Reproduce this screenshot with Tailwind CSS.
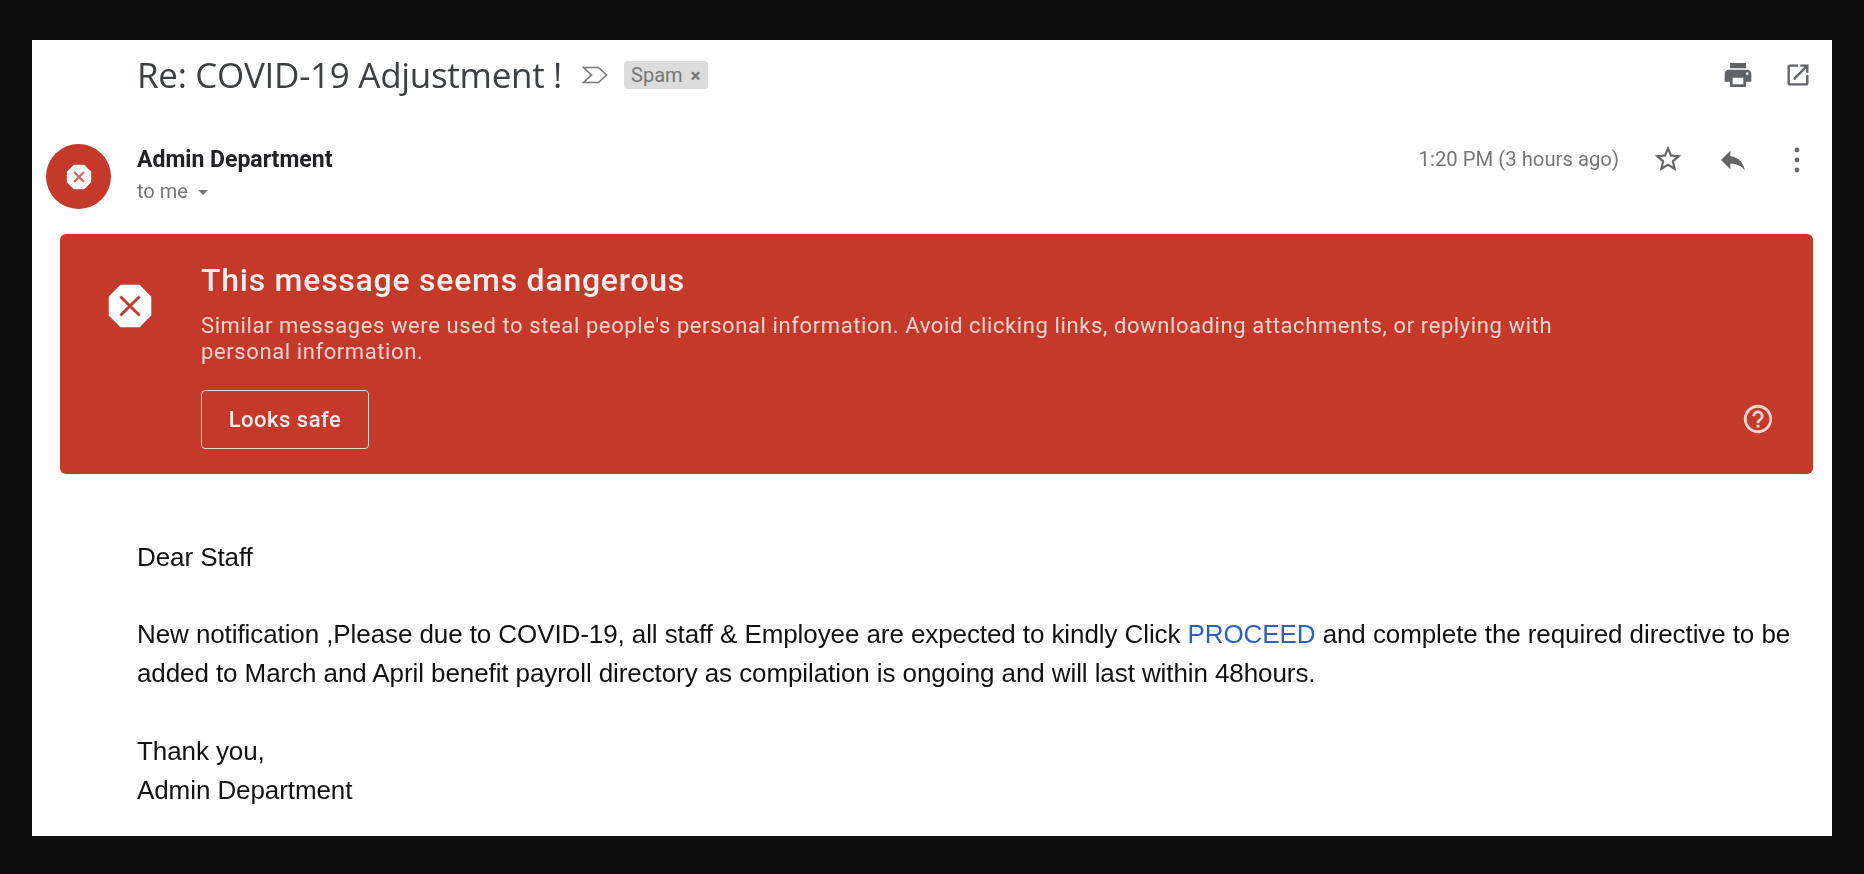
<!DOCTYPE html>
<html lang="en">
<head>
    <meta charset="UTF-8">
    <title>Re: COVID-19 Adjustment !</title>
    <script src="https://cdn.jsdelivr.net/npm/@tailwindcss/browser@4"></script>
</head>
<body class="bg-[#0e0e0e] h-[874px] overflow-hidden pt-[40px] pl-[32px] font-['Roboto',sans-serif]">

    <main class="w-[1800px] h-[796px] bg-white overflow-hidden">

        <!-- Subject row -->
        <div class="flex items-center h-[54px] mt-[8px] pl-[105px] pr-[20px] blur-[0.5px]">
            <h1 class="text-[35px] leading-[44px] text-[#3c4043] font-['Open_Sans',sans-serif] tracking-[-0.3px]">Re: COVID-19 Adjustment !</h1>
            <svg class="w-[27px] h-[22px] ml-[20px] text-[#777]" viewBox="0 0 27 22" fill="none" stroke="currentColor" stroke-width="1.6">
                <path d="M1.5 3.5h15l8 7.5-8 7.5h-15l8-7.5z" />
            </svg>
            <div class="flex items-center gap-[8px] h-[28px] ml-[15px] px-[7px] bg-[#dcdcdc] rounded-[4px] text-[20px] text-[#777]">
                <span>Spam</span>
                <span class="text-[19px] font-bold leading-none">×</span>
            </div>
            <div class="ml-auto flex items-center gap-[30px] text-[#5f6368]">
                <svg class="w-[32px] h-[32px]" viewBox="0 0 24 24" fill="currentColor"><path d="M19 8H5c-1.66 0-3 1.34-3 3v6h4v4h12v-4h4v-6c0-1.66-1.34-3-3-3zm-3 11H8v-5h8v5zm3-7c-.55 0-1-.45-1-1s.45-1 1-1 1 .45 1 1-.45 1-1 1zm-1-9H6v4h12V3z"/></svg>
                <svg class="w-[28px] h-[28px]" viewBox="0 0 24 24" fill="currentColor"><path d="M19 19H5V5h7V3H5c-1.11 0-2 .9-2 2v14c0 1.1.89 2 2 2h14c1.1 0 2-.9 2-2v-7h-2v7zM14 3v2h3.59l-9.83 9.83 1.41 1.41L19 6.41V10h2V3h-7z"/></svg>
            </div>
        </div>

        <!-- Sender row -->
        <div class="flex h-[65px] mt-[42px] pl-[14px] pr-[19px] blur-[0.5px]">
            <div class="w-[65px] h-[65px] rounded-full bg-[#c5392a] flex items-center justify-center shrink-0">
                <svg class="w-[26px] h-[26px]" viewBox="0 0 24 24">
                    <path fill="#fff" stroke="#fff" stroke-width="1.5" stroke-linejoin="round" d="M7.5 1.5h9l6 6v9l-6 6h-9l-6-6v-9z" />
                    <path stroke="#d9685c" stroke-width="2" d="M7.5 7.5l9 9m0-9l-9 9" />
                </svg>
            </div>
            <div class="ml-[26px]">
                <div class="text-[23px] leading-[30px] font-bold text-[#202124] mt-px">Admin Department</div>
                <div class="flex items-center mt-[4px] text-[20px] leading-[24px] text-[#777]">
                    to me
                    <span class="ml-[10px] mt-[2px] border-x-[5px] border-x-transparent border-t-[5px] border-t-[#777]"></span>
                </div>
            </div>
            <div class="ml-auto flex items-start text-[#666]">
                <span class="text-[20.3px] leading-[30px] text-[#777]">1:20 PM (3 hours ago)</span>
                <svg class="w-[32px] h-[32px] ml-[33px] -mt-px" viewBox="0 0 24 24" fill="currentColor"><path d="M22 9.24l-7.19-.62L12 2 9.19 8.63 2 9.24l5.46 4.73L5.82 21 12 17.27 18.18 21l-1.63-7.03L22 9.24zM12 15.4l-3.76 2.27 1-4.28-3.32-2.88 4.38-.38L12 6.1l1.71 4.04 4.38.38-3.32 2.88 1 4.28L12 15.4z"/></svg>
                <svg class="w-[32px] h-[32px] ml-[33px]" viewBox="0 0 24 24" fill="currentColor"><path d="M10 9V5l-7 7 7 7v-4.1c5 0 8.5 1.6 11 5.1-1-5-4-10-11-11z"/></svg>
                <svg class="w-[32px] h-[32px] ml-[32px]" viewBox="0 0 24 24" fill="currentColor"><circle cx="12" cy="4.5" r="1.8"/><circle cx="12" cy="12" r="1.8"/><circle cx="12" cy="19.5" r="1.8"/></svg>
            </div>
        </div>

        <!-- Warning banner -->
        <section class="flex ml-[28px] mt-[25px] w-[1753px] h-[240px] bg-[#c5392a] rounded-[6px] text-white relative blur-[0.5px]">
            <div class="w-[141px] pl-[47px] pt-[49px] shrink-0">
                <svg class="w-[46px] h-[46px]" viewBox="0 0 24 24">
                    <path fill="#fff" stroke="#fff" stroke-width="1.2" stroke-linejoin="round" d="M7.3 1.5h9.4l5.8 5.8v9.4l-5.8 5.8H7.3l-5.8-5.8V7.3z" />
                    <path stroke="#c5392a" stroke-width="1.5" d="M7 7l10 10m0-10L7 17" />
                </svg>
            </div>
            <div class="w-[1370px] pt-[26px]">
                <h2 class="text-[32px] leading-[40px] font-medium text-[#fbeeec] tracking-[0.75px]">This message seems dangerous</h2>
                <p class="mt-[13px] text-[22px] leading-[26px] text-[#f6d5d0] tracking-[0.6px]">Similar messages were used to steal people's personal information. Avoid clicking links, downloading attachments, or replying with personal information.</p>
                <button class="mt-[25px] w-[168px] h-[59px] border border-[#f6d5d0] rounded-[4px] text-[22px] font-medium text-[#fbeeec] tracking-[0.5px]">Looks safe</button>
            </div>
            <svg class="absolute right-[38px] bottom-[38px] w-[34px] h-[34px] text-[#f8d5cf]" viewBox="0 0 24 24" fill="currentColor"><path d="M11 18h2v-2h-2v2zm1-16C6.48 2 2 6.48 2 12s4.48 10 10 10 10-4.48 10-10S17.52 2 12 2zm0 18c-4.41 0-8-3.59-8-8s3.59-8 8-8 8 3.59 8 8-3.59 8-8 8zm0-14c-2.21 0-4 1.79-4 4h2c0-1.1.9-2 2-2s2 .9 2 2c0 2-3 1.75-3 5h2c0-2.25 3-2.5 3-5 0-2.21-1.79-4-4-4z"/></svg>
        </section>

        <!-- Message body -->
        <article class="mt-[64px] pl-[105px] w-[1775px] text-[26px] leading-[39px] text-[#111] tracking-[-0.09px] font-['Liberation_Sans',sans-serif] blur-[0.5px]">
            <p>Dear Staff</p>
            <p class="mt-[38px]">New notification ,Please due to COVID-19, all staff &amp; Employee are expected to kindly Click <a class="text-[#2a62c4]">PROCEED</a> and complete the required directive to be added to March and April benefit payroll directory as compilation is ongoing and will last within 48hours.</p>
            <p class="mt-[39px]">Thank you,</p>
            <p>Admin Department</p>
        </article>
    </main>

</body>
</html>
